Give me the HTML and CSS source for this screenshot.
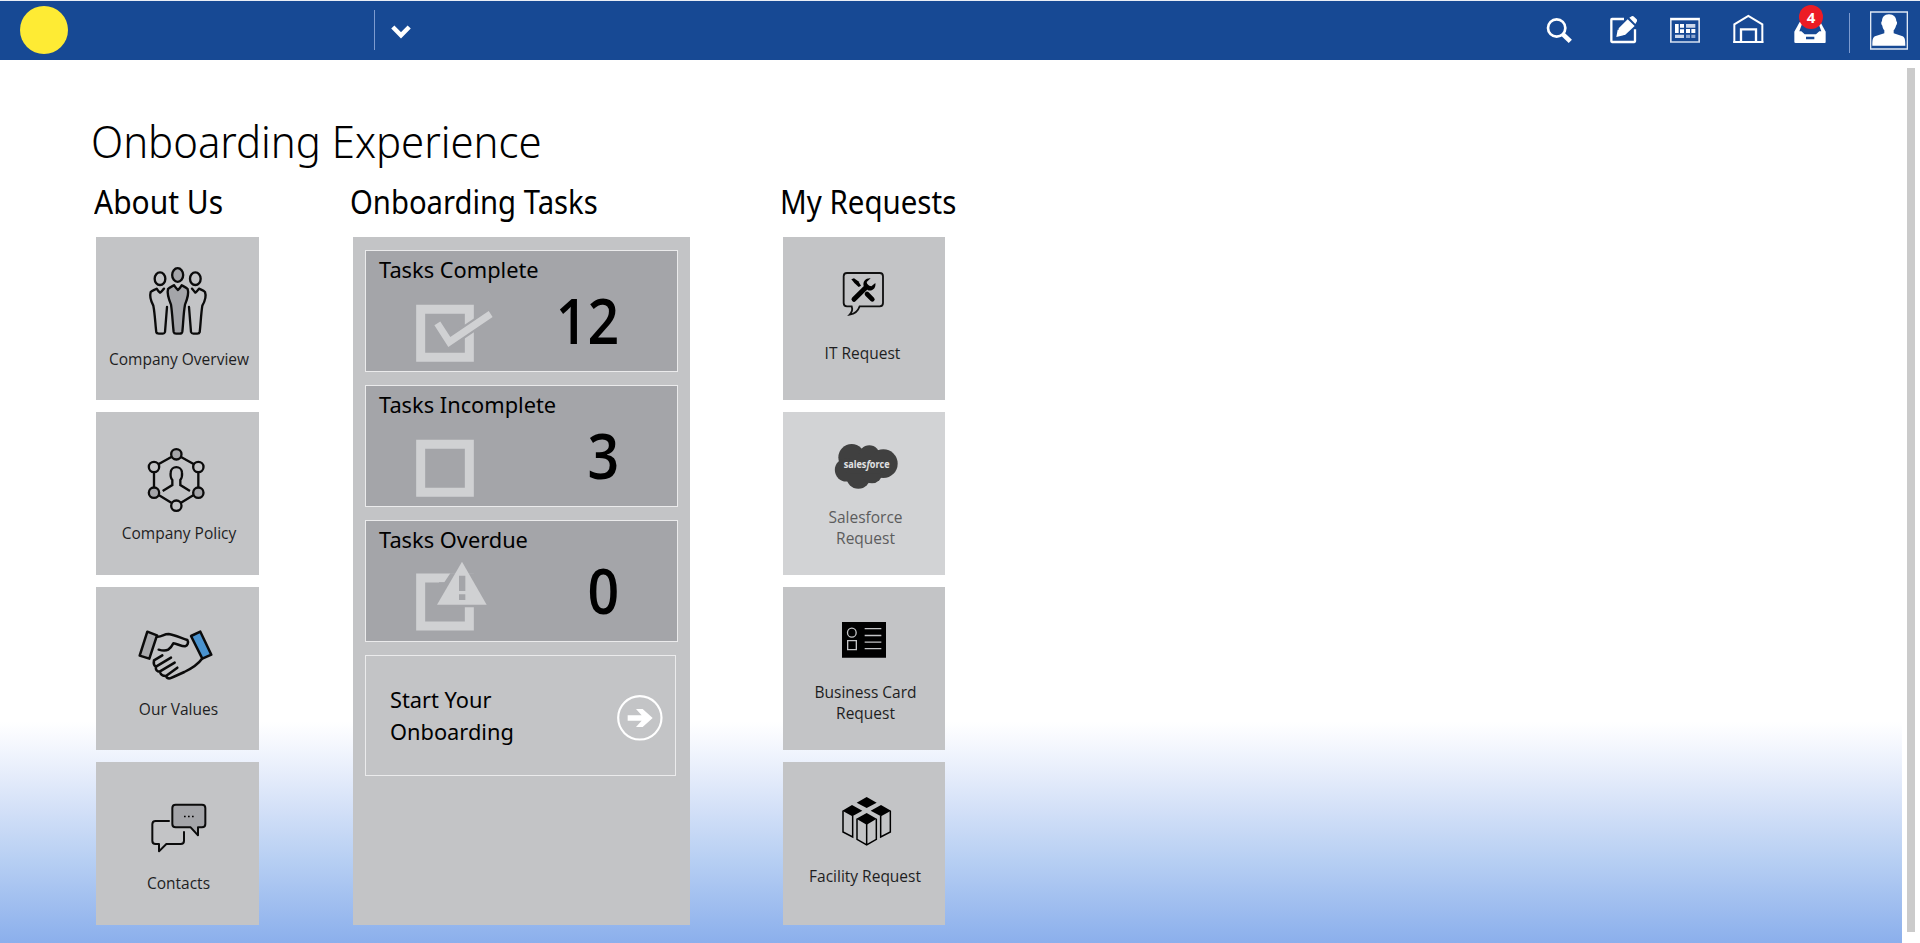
FILE: index.html
```html
<!DOCTYPE html>
<html lang="en">
<head>
<meta charset="utf-8">
<title>Onboarding Experience</title>
<link rel="stylesheet" href="styles.css">
</head>
<body>
<header class="topbar">
  <div class="brand"><span class="logo"></span></div>
  <div class="switcher">
    <svg class="chevron" width="20" height="14" viewBox="0 0 20 14"><path d="M1.800 2 10 10.400 18.200 2" fill="none" stroke="#fff" stroke-width="4.400"/></svg>
  </div>
  <nav class="tools">
    <svg class="tool tool-search" width="26" height="59" viewBox="138 3 78 177"><circle cx="170" cy="84" r="26" fill="none" stroke="#fff" stroke-width="8"/><path d="m189 103 22 21" stroke="#fff" stroke-width="14"/></svg>
    <svg class="tool tool-edit" width="27" height="59" viewBox="330 3 81 177"><path d="M372 57h-36q-2 0-2 2v65q0 2 2 2h67q2 0 2-2V88" fill="none" stroke="#fff" stroke-width="7"/><path d="m349 111 4-22 13 0 5 17zM356 85l27-27 21 20-29 27h-7l-2-9-10-1zM388 53l7-4q4-2 7 1l8 8q3 4 0 7l-4 7z" fill="#fff"/></svg>
    <svg class="tool tool-news" width="30" height="59" viewBox="510 3 90 177"><path d="M512.500 56h85v70h-85z" fill="none" stroke="#d5dfef" stroke-width="5"/><path d="M512 54h86v7h-86z" fill="#fff"/><path d="M525 72h11v27h-11zM540 72h12v11h-12zM540 88h12v11h-12zM558 87h12v12h-12zM574 87h12v12h-12z" fill="#fff"/><path d="M558 72h28v11h-28zM525 104h27v10h-27z" fill="#cdd8ea"/><path d="M558 104h12v10h-12zM574 104h12v10h-12z" fill="#8fa8cf"/></svg>
    <svg class="tool tool-home" width="31" height="59" viewBox="698 3 93 177"><path d="M702 129V73l42-25 42 25v56" fill="none" stroke="#fff" stroke-width="6"/><path d="M699 126h90" stroke="#fff" stroke-width="6"/><path d="M722 126V88h45v38" fill="none" stroke="#fff" stroke-width="7"/></svg>
    <div class="inbox">
      <svg class="tool" width="32" height="59" viewBox="882 3 96 177"><path d="M899 66h62l16 29v31q0 3-3 3h-87q-4 0-4-3V95z" fill="#fff"/><path d="M906 72h50l8 22h-6l-10 9h-34l-10-9h-6zM918 110h25v8h-25z" fill="#174994"/></svg>
      <span class="badge">4</span>
    </div>
    <span class="divider"></span>
    <svg class="tool" width="38" height="59" viewBox="1110 3 114 177"><path d="M1112 36h110v111h-110z" fill="none" stroke="#dfe7f3" stroke-width="4"/><path d="M1167 43c14 0 22 9 22 21 3 0 3 10-1 13-2 8-5 11-7 14v9l27 9c7 3 8 12 8 28h-99c0-16 1-25 8-28l28-9v-9c-3-4-5-7-6-14-4-3-4-13-1-13 0-12 7-21 21-21" fill="#fff"/></svg>
  </nav>
</header>
<div class="viewport">
<main class="page">
  <h1 class="title"><span class="title-text">Onboarding Experience</span></h1>
  <div class="columns">
    <section class="column column-about">
      <h2 class="heading heading-about"><span class="heading-text">About Us</span></h2>
      <div class="tiles">
        <a class="tile tile-overview">
          <svg class="icon" width="163" height="90" viewBox="48 51 489 270">
            <g fill="none" stroke="#0b0b0b" stroke-width="7" stroke-linecap="round" stroke-linejoin="round">
              <ellipse cx="240" cy="176" rx="16" ry="19"/><ellipse cx="346" cy="176" rx="16" ry="19"/>
              <path d="M252 206c-4 4-6 8-12 12-4-2-7-7-10-12-7 4-13 5-18 10-4 14 0 26 8 41 5 25 6 58 9 80 1 4 3 4 8 4h12c4 0 5-2 6-5 2-25 4-50 6-75"/>
              <path d="M336 206c4 4 6 8 10 12 5-3 8-8 11-12 8 4 13 5 18 10 5 14 0 27-8 41-4 25-5 55-8 80-1 4-3 4-7 4h-12c-4 0-6-2-7-5-2-25-4-50-6-75"/>
              <g fill="#a4a5a9"><ellipse cx="293" cy="165" rx="16.500" ry="20.500"/><path d="M282 196c-8 4-14 6-18 11-4 15 2 30 9 47 4 27 5 56 8 82 1 4 3 5 7 5h11c5 0 7-2 8-6 3-25 3-54 8-81 7-17 13-32 8-47-4-5-10-7-18-11-3 5-6 9-11 14-6-5-8-9-12-14"/></g>
            </g>
          </svg>
          <span class="label">Company Overview</span>
        </a>
        <a class="tile tile-policy">
          <svg class="icon" width="163" height="90" viewBox="48 576 489 270">
            <g fill="none" stroke="#0b0b0b" stroke-width="7">
              <path d="m235 733 39-22M303 711l39 22M222 757v46M355 757v46M236 825l38 23M303 848l38-23"/>
              <path d="m248 813 29-18v-15c-6-6-6-12-5-22 1-22 33-22 34 0 1 10 0 16-5 22v15l29 18"/>
              <circle cx="222" cy="741" r="15.500"/><circle cx="355" cy="741" r="15.500"/><circle cx="289" cy="857" r="15.500"/>
              <g fill="#a4a5a9"><circle cx="289" cy="703" r="15.500"/><circle cx="222" cy="818" r="15.500"/><circle cx="355" cy="818" r="15.500"/></g>
            </g>
          </svg>
          <span class="label">Company Policy</span>
        </a>
        <a class="tile tile-values">
          <svg class="icon" width="163" height="90" viewBox="48 51 489 270">
            <g fill="none" stroke="#0b0b0b" stroke-width="7.500" stroke-linecap="round" stroke-linejoin="round">
              <path d="m202 185 29 11-23 70-29-9z" fill="#a9aaad"/><path d="m361 185 33 69-27 12-34-68z" fill="#4a93cf"/>
              <path d="M231 200c16 1 19-8 35-8 19 3 39 13 56 18 5 8 0 17-7 19-12 0-24-8-35-9-9 17-17 27-44 19"/>
              <path d="M366 266c-14 20-37 32-53 40-15 7-29 13-43 19-6 1-10-2-12-7l34-25M258 318c-9 0-17-4-18-14l44-26M240 305c-10 0-14-7-12-15l45-27M227 290c-8-6-6-14-5-19l25-15"/>
            </g>
          </svg>
          <span class="label">Our Values</span>
        </a>
        <a class="tile tile-contacts">
          <svg class="icon" width="163" height="90" viewBox="48 576 489 270">
            <g fill="none" stroke="#0b0b0b" stroke-width="6" stroke-linecap="round" stroke-linejoin="round">
              <path d="M267 753h-40q-10 0-10 10v49q0 10 10 10h10v22l22-22h43q10 0 10-10v-26"/>
              <path d="M287 704h79q10 0 10 10v48q0 10-10 10h-12v24l-22-24h-45q-10 0-10-10v-48q0-10 10-10z" fill="#a4a5a9"/>
            </g>
            <path d="M312 737h5v5h-5zM324 737h5v5h-5zM336 737h5v5h-5z"/>
          </svg>
          <span class="label">Contacts</span>
        </a>
      </div>
    </section>
    <section class="column column-tasks">
      <h2 class="heading heading-tasks"><span class="heading-text">Onboarding Tasks</span></h2>
      <div class="panel">
        <div class="card">
          <h3 class="card-title">Tasks Complete</h3>
          <div class="card-body">
            <svg class="status" width="78" height="72" viewBox="228 363 234 216"><path d="M242 418h146v144H242z" fill="none" stroke="#d0d1d3" stroke-width="27"/><path d="m292 460 36 56 124-84" fill="none" stroke="#a4a5a9" stroke-width="34"/><path d="m292 460 36 56 124-84" fill="none" stroke="#d0d1d3" stroke-width="21"/></svg>
            <span class="count">12</span>
          </div>
        </div>
        <div class="card">
          <h3 class="card-title">Tasks Incomplete</h3>
          <div class="card-body">
            <svg class="status" width="78" height="72" viewBox="228 363 234 216"><path d="M242 418h146v144H242z" fill="none" stroke="#d0d1d3" stroke-width="27"/></svg>
            <span class="count">3</span>
          </div>
        </div>
        <div class="card">
          <h3 class="card-title">Tasks Overdue</h3>
          <div class="card-body">
            <svg class="status" width="78" height="72" viewBox="228 181 234 216"><path d="M242 232h146v144H242z" fill="none" stroke="#d0d1d3" stroke-width="27"/><path d="M331 218l-18 27h-16v75h106V218z" fill="#a4a5a9"/><path d="M366 183 440 312H291z" fill="#d0d1d3"/><path d="M357 225h19v46h-19zM357 281h19v17h-19z" fill="#a4a5a9"/></svg>
            <span class="count">0</span>
          </div>
        </div>
        <a class="start">
          <span class="start-text">Start Your<br>Onboarding</span>
          <svg class="arrow" width="46" height="46" viewBox="830 584 138 138"><circle cx="898.500" cy="652.500" r="65" fill="none" stroke="#fff" stroke-width="6.500"/><path d="M862 645h42l-17-19h20l30 27-30 27h-20l17-19h-42z" fill="#fff"/></svg>
        </a>
      </div>
    </section>
    <section class="column column-requests">
      <h2 class="heading heading-requests"><span class="heading-text">My Requests</span></h2>
      <div class="tiles">
        <a class="tile tile-it">
          <svg class="icon" width="162" height="90" viewBox="39 201 486 270">
            <path d="M231 309h98q10 0 10 10v80q0 10-10 10h-60c-4 12-13 23-30 25 7-7 9-16 6-25h-14q-10 0-10-10v-80q0-10 10-10z" fill="none" stroke="#111" stroke-width="5.500"/>
            <path d="m244 328 8-3 13 9 8 13-7 4-13-12z"/><path d="m252 388 38-38" stroke="#000" stroke-width="15" stroke-linecap="round"/><path d="m291 372 16 16" stroke="#000" stroke-width="14" stroke-linecap="round"/>
            <path d="M302 325c-15-1-24 9-21 23l13 13c13 4 25-7 22-22l-12 10-11-3-3-10z"/>
          </svg>
          <span class="label">IT Request</span>
        </a>
        <a class="tile tile-salesforce">
          <svg class="icon" width="162" height="90" viewBox="39 726 486 270">
            <g fill="#404040"><circle cx="245" cy="862" r="40"/><circle cx="298" cy="858" r="32"/><circle cx="340" cy="881" r="43"/><circle cx="229" cy="900" r="34.500"/><circle cx="265" cy="920" r="36"/><circle cx="306" cy="909" r="31"/><path d="M240 860h90v50h-90z"/></g>
            <text class="wordmark" x="221" y="893" textLength="138" lengthAdjust="spacingAndGlyphs">sales<tspan font-style="italic">f</tspan>orce</text>
          </svg>
          <span class="label">Salesforce<br>Request</span>
        </a>
        <a class="tile tile-business">
          <svg class="icon" width="162" height="90" viewBox="39 51 486 270">
            <path d="M216 156h132v107H216z"/><g fill="none" stroke="#c3c4c6" stroke-width="4"><ellipse cx="245.500" cy="188" rx="13" ry="13.500"/><path d="M233 212h26v27h-26zM284 176h50M284 196.500h50M284 216.500h50M284 236h50"/></g>
          </svg>
          <span class="label">Business Card<br>Request</span>
        </a>
        <a class="tile tile-facility">
          <svg class="icon" width="162" height="90" viewBox="39 576 486 270">
            <path d="m290 681 30 17-30 16-30-16zM246 705l31 17-30 17-30-17zM333 705l30 17-30 17-31-17zM290 729l30 17-30 18-31-18z"/>
            <g fill="none" stroke="#000" stroke-width="4.500"><path d="M219 722v64l29 15v-64M361 722v64l-29 15v-64M261 746v62l29 17 29-17v-62M290 760v65"/></g>
          </svg>
          <span class="label">Facility Request</span>
        </a>
      </div>
    </section>
  </div>
</main>
<div class="scroll"><span class="thumb"></span></div>
</div>
</body>
</html>
```
FILE: styles.css
```css
* { box-sizing: border-box; }

body {
  margin: 0;
  height: 943px;
  overflow: hidden;
  display: flex;
  flex-direction: column;
  background: #fff;
  color: #000;
  font-family: "Open Sans", "Noto Sans", sans-serif;
}

h1, h2, h3 { margin: 0; }

svg { display: block; flex: none; }

/* Top bar */
.topbar {
  height: 60px;
  flex: none;
  display: flex;
  border-top: 1px solid #e9eef6;
  background: #174994;
  background-clip: padding-box;
}

.brand { width: 374px; padding: 5px 0 0 20px; }

.logo {
  display: block;
  width: 48px;
  height: 48px;
  border-radius: 50%;
  background: #feeb34;
}

.switcher {
  height: 40px;
  margin-top: 9px;
  padding: 15px 0 0 16px;
  border-left: 1px solid #7d9bd0;
}

.tools { display: flex; margin-left: auto; padding-right: 12px; }
.tool-search { margin-right: 38px; }
.tool-edit { margin-right: 33px; }
.tool-news { margin-right: 32.700px; }
.tool-home { margin-right: 30.300px; }

.inbox { position: relative; }

.badge {
  position: absolute;
  left: 5px;
  top: 4px;
  width: 24px;
  height: 24px;
  border-radius: 50%;
  background: #ec1c24;
  color: #fff;
  font-size: 15px;
  font-weight: 700;
  line-height: 24px;
  text-align: center;
}

.divider {
  width: 1px;
  height: 40px;
  margin: 12px 20px 0 23px;
  background: #7d9bd0;
}

/* Page */
.viewport { flex: 1; display: flex; min-height: 0; }

.page {
  width: 1902px;
  padding: 50px 0 0 96px;
  background: linear-gradient(to bottom, #fff 662px, #f0f4fd 694px, #d6e2f8 744px, #b7cff3 800px, #8bafec 883px);
}

.scroll { flex: 1; padding: 8px 0 0 5px; }
.thumb { display: block; width: 8px; height: 864px; background: #cbcbcb; }

.title {
  height: 69px;
  margin-left: -5px;
  font-family: "Noto Sans", "Open Sans", sans-serif;
  font-size: 44.500px;
  font-weight: 300;
  line-height: 61px;
  white-space: nowrap;
}

.title-text {
  display: inline-block;
  transform: scaleX(0.941);
  transform-origin: left;
}

.columns { display: flex; }
.column-about { width: 163px; margin-right: 94px; }
.column-tasks { width: 337px; margin-right: 93px; }
.column-requests { width: 162px; }

.heading {
  height: 58px;
  margin-left: -2px;
  font-family: "Noto Sans", "Open Sans", sans-serif;
  font-size: 32.500px;
  font-weight: 400;
  line-height: 46px;
  white-space: nowrap;
}

.heading-text { display: inline-block; transform-origin: left; transform: scaleX(0.9); }
.heading-about .heading-text { transform: scaleX(0.922); }
.heading-tasks, .heading-requests { margin-left: -3.500px; }
.heading-requests .heading-text { transform: scaleX(0.907); }

.tiles { display: flex; flex-direction: column; gap: 12px; }

.tile {
  height: 163px;
  background: #c3c4c6;
  color: #1e1e1f;
  font-size: 15.500px;
  line-height: 21px;
  text-align: center;
}

.icon { overflow: visible; }
.label { display: block; white-space: nowrap; }

.tile-overview .label { margin: 22px 0 0 3px; }
.tile-policy .label { margin: 21px 0 0 3px; }
.tile-values .label { margin: 22px 0 0 2px; }
.tile-contacts .label { margin: 21px 0 0 2px; }
.tile-it .label { margin: 16px 3px 0 0; }
.tile-salesforce .label { margin: 5px 0 0 3px; }
.tile-business .label { margin: 5px 0 0 3px; }
.tile-facility .label { margin: 14px 0 0 2px; }

.tile-salesforce { background: #d2d3d5; color: #5c5c5d; }

.wordmark { fill: #e2e2e3; font-size: 29px; font-weight: 700; }

/* Task summary */
.panel {
  height: 688px;
  padding: 13px 12px;
  display: flex;
  flex-direction: column;
  gap: 13px;
  background: #c3c4c6;
}

.card {
  height: 122px;
  border: 1px solid #ebebec;
  background: #a4a5a9;
}

.card-title {
  height: 40px;
  padding: 4px 0 0 13px;
  font-family: "Noto Sans", "Open Sans", sans-serif;
  font-size: 21.800px;
  font-weight: 400;
  line-height: 30px;
  white-space: nowrap;
}

.card-body { display: flex; justify-content: space-between; padding: 0 57px 0 50px; }

.count {
  font-size: 63px;
  font-weight: 600;
  line-height: 80px;
  margin-top: -11px;
  padding-right: 1px;
  transform: scaleX(0.88);
  transform-origin: right;
}

.start {
  width: 311px;
  height: 121px;
  display: flex;
  justify-content: space-between;
  align-items: flex-start;
  padding: 27px 12px 0 24px;
  border: 1px solid #ebebec;
}

.start-text {
  margin-top: 1px;
  font-family: "Noto Sans", "Open Sans", sans-serif;
  font-size: 21.800px;
  line-height: 32px;
  white-space: nowrap;
}

.arrow { margin-top: 12px; }
```
